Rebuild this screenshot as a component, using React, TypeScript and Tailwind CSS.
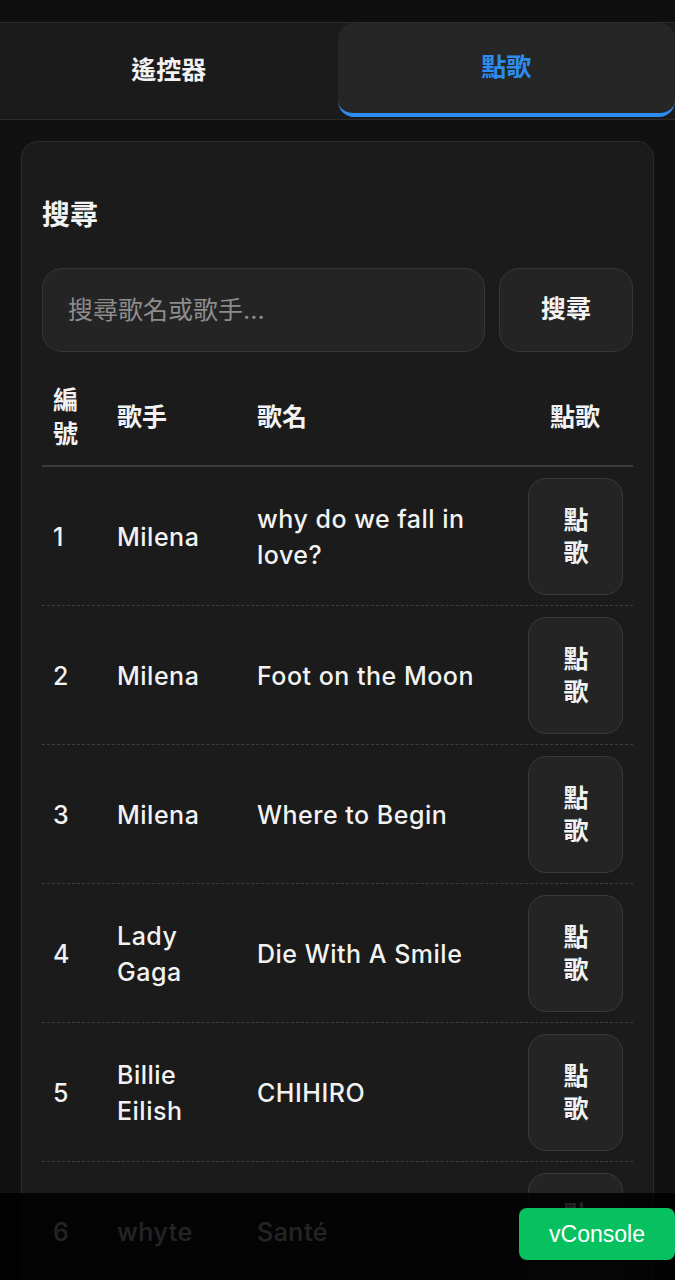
import React from 'react';

interface Song {
  id: number;
  singer: string;
  title: string;
}

const songs: Song[] = [
  { id: 1, singer: 'Milena', title: 'why do we fall in love?' },
  { id: 2, singer: 'Milena', title: 'Foot on the Moon' },
  { id: 3, singer: 'Milena', title: 'Where to Begin' },
  { id: 4, singer: 'Lady Gaga', title: 'Die With A Smile' },
  { id: 5, singer: 'Billie Eilish', title: 'CHIHIRO' },
  { id: 6, singer: 'whyte', title: 'Santé' },
  { id: 7, singer: 'Milena', title: 'Lullaby' },
];

const cols = 'grid grid-cols-[64px_140px_1fr_116px] items-center';

export default function App() {
  return (
    <div className="min-h-screen bg-[#111111] font-['Inter','Noto_Sans_CJK_TC',sans-serif] text-[#f2f2f2]">
      <div className="h-[22px] bg-[#0f0f0f]" />

      {/* tabs */}
      <div className="flex h-[98px] border-y border-[#2c2c2c] bg-[#1b1b1b]">
        <button className="flex-1 text-[25px] font-bold text-[#f2f2f2]">遙控器</button>
        <button className="h-[94px] flex-1 rounded-[16px] border-b-4 border-[#2d8cf0] bg-[#262626] text-[25px] font-bold text-[#2d8cf0]">
          點歌
        </button>
      </div>

      <div className="px-[21px] pt-[21px]">
        <div className="rounded-[16px] border border-[#2c2c2c] bg-[#1b1b1b] px-[20px] pt-[53px] pb-[20px]">
          <h2 className="text-[28px] font-bold leading-[40px]">搜尋</h2>

          <div className="mt-[33px] flex gap-[14px]">
            <input
              placeholder="搜尋歌名或歌手..."
              className="h-[84px] min-w-0 flex-1 rounded-[20px] border border-[#363636] bg-[#242424] px-[25px] text-[25px] text-[#f2f2f2] placeholder:text-[#8c8c8c] outline-none"
            />
            <button className="h-[84px] w-[134px] rounded-[20px] border border-[#363636] bg-[#242424] text-[25px] font-bold">
              搜尋
            </button>
          </div>

          <div className="mt-[16px]">
            <div className={`${cols} border-b-2 border-[#3a3a3a] pt-[15px] pb-[14px] text-[25px] font-bold leading-[34px]`}>
              <div className="px-[11px]">編號</div>
              <div className="px-[11px]">歌手</div>
              <div className="px-[11px]">歌名</div>
              <div className="px-[11px] text-center">點歌</div>
            </div>

            {songs.map((song) => (
              <div
                key={song.id}
                className={`${cols} border-b border-dashed border-[#3e3e3e] pt-[11px] pb-[10px] text-[25px] font-medium leading-[36px] tracking-[0.5px]`}
              >
                <div className="px-[11px]">{song.id}</div>
                <div className="px-[11px]">{song.singer}</div>
                <div className="px-[11px]">{song.title}</div>
                <div className="flex justify-center">
                  <button className="h-[117px] w-[95px] rounded-[18px] border border-[#3a3a3a] bg-[#242424] px-[35px] text-[25px] font-bold leading-[33px] tracking-normal">
                    點歌
                  </button>
                </div>
              </div>
            ))}
          </div>
        </div>
      </div>

      {/* bottom overlay */}
      <div className="fixed inset-x-0 bottom-0 h-[87px] bg-black/85" />
      <button className="fixed right-0 bottom-[20px] h-[52px] w-[156px] rounded-[8px] bg-[#07c160] font-['Liberation_Sans',sans-serif] text-[23px] text-white">
        vConsole
      </button>
    </div>
  );
}
